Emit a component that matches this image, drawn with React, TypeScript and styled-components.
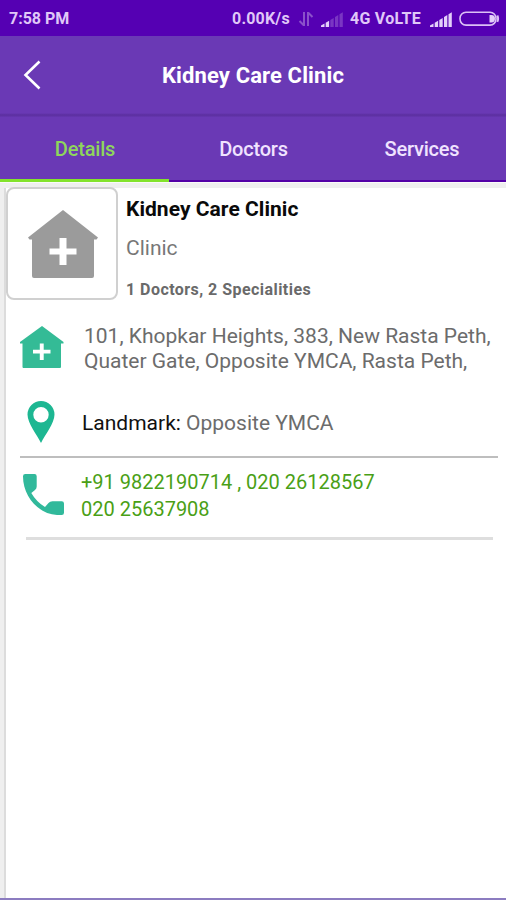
import React from "react";
import styled, { createGlobalStyle } from "styled-components";

const GlobalStyle = createGlobalStyle`
  * { box-sizing: border-box; }
  body { margin: 0; background: #fff; font-family: Roboto, "Liberation Sans", sans-serif; }
  svg { display: block; flex: none; }
`;

const Screen = styled.main`
  width: 506px;
  height: 900px;
  display: flex;
  flex-direction: column;
  overflow: hidden;
  background: #fff;
`;

const StatusBar = styled.div`
  height: 36px;
  flex: none;
  display: flex;
  align-items: center;
  justify-content: space-between;
  padding: 2px 6px 0 9px;
  background: #5500b3;
  color: #e0c8f8;
`;

const StatusGroup = styled.div`
  display: grid;
  grid-template-columns: 66px 22px 30px 79px 30px 41px;
  align-items: center;
`;

const StatusText = styled.span<{ $spacing?: number }>`
  font-size: 16px;
  font-weight: 700;
  line-height: 20px;
  white-space: nowrap;
  letter-spacing: ${(p) => p.$spacing ?? 0}px;
`;

const Header = styled.header`
  height: 81px;
  flex: none;
  display: grid;
  grid-template-columns: 64px 1fr 64px;
  align-items: center;
  background: linear-gradient(#6a39b5 77px, #5b2f9f 79px, #6637b0 81px);
`;

const BackButton = styled.button`
  border: 0;
  background: none;
  padding: 0 0 3px 22px;
`;

const Title = styled.h1`
  margin: 0 0 1px;
  text-align: center;
  color: #fff;
  font-size: 22px;
  font-weight: 700;
  line-height: 28px;
  white-space: nowrap;
  letter-spacing: 0.12px;
`;

const Tabs = styled.nav`
  height: 65px;
  flex: none;
  display: grid;
  grid-template-columns: 169px 168px 169px;
  background: #6a39b5;
`;

const Tab = styled.button<{ $active?: boolean }>`
  border: 0;
  border-bottom: ${(p) => (p.$active ? "3px solid #83e32c" : "2px solid #5300a6")};
  background: none;
  padding: ${(p) => (p.$active ? "2px" : "1px")} 0 0 1px;
  font: 500 20px/24px Roboto, sans-serif;
  letter-spacing: -0.2px;
  color: ${(p) => (p.$active ? "#8fd65c" : "#f0e3ff")};
`;

const Body = styled.section`
  flex: 1;
  min-height: 0;
  display: flex;
  background: #efefef;
  border-top: 1px solid #fafafa;
  border-bottom: 2px solid #8c7cc0;
`;

const Sheet = styled.div`
  flex: 1;
  margin: 5px 0 0 4px;
  border-left: 2px solid #dcdcdc;
  background: #fff;
  display: flex;
  flex-direction: column;
`;

const Summary = styled.div`
  display: flex;
  height: 120px;
`;

const Thumb = styled.div`
  width: 112px;
  height: 113px;
  margin-top: -1px;
  flex: none;
  border: 2px solid #d0d0d0;
  border-radius: 8px;
  background: #fff;
  display: flex;
  align-items: center;
  justify-content: center;
  padding-left: 2px;
`;

const SummaryText = styled.div`
  padding-left: 8px;
  display: flex;
  flex-direction: column;
`;

const Name = styled.h2`
  margin: 7px 0 0;
  font-size: 21px;
  font-weight: 700;
  line-height: 28px;
  letter-spacing: 0.04px;
  color: #0a0a0a;
  white-space: nowrap;
`;

const Kind = styled.div`
  margin-top: 11px;
  font-size: 21px;
  line-height: 28px;
  color: #777;
`;

const Counts = styled.div`
  margin-top: 17px;
  font-size: 16px;
  font-weight: 700;
  line-height: 22px;
  letter-spacing: 0.45px;
  color: #6a6a6a;
  white-space: nowrap;
`;

const Row = styled.div<{ $height: number; $indent: number }>`
  height: ${(p) => p.$height}px;
  flex: none;
  display: grid;
  grid-template-columns: ${(p) => p.$indent}px 1fr;
`;

const IconCell = styled.div<{ $left: number; $top: number }>`
  padding: ${(p) => p.$top}px 0 0 ${(p) => p.$left}px;
`;

const Info = styled.div<{ $top: number; $size?: number; $leading?: number; $color?: string }>`
  padding-top: ${(p) => p.$top}px;
  font-size: ${(p) => p.$size ?? 21}px;
  line-height: ${(p) => p.$leading ?? 25}px;
  color: ${(p) => p.$color ?? "#6c6c6c"};
  white-space: nowrap;
`;

const Label = styled.span`
  color: #111;
`;

const Rule = styled.hr<{ $thick?: boolean }>`
  width: ${(p) => (p.$thick ? 467 : 478)}px;
  height: ${(p) => (p.$thick ? 3 : 2)}px;
  margin: 0 0 0 ${(p) => (p.$thick ? 20 : 14)}px;
  flex: none;
  border: 0;
  background: ${(p) => (p.$thick ? "#dedede" : "#bebebe")};
`;

const Arrows = () => (
  <svg width="17" height="16" viewBox="0 0 17 16" fill="none" stroke="#8b51ca" strokeWidth="2">
    <path d="M6 1v14M1.500 10l4 4M10 15V1M10.500 2l4 4" />
  </svg>
);

const bars = [
  "M1 16v-1.500l3.500-2V16Z",
  "M5.700 16v-4.200l3.400-2V16Z",
  "M10.300 16V9l3.400-2V16Z",
  "M15 16V6l3.300-2V16Z",
  "M19.500 16V3.300L22.800 1.300V16Z",
];

const Signal = ({ level }: { level: number }) => (
  <svg width="24" height="17" viewBox="0 0 24 17">
    {bars.map((d, i) => (
      <path key={i} d={d} fill={i < level ? "#e4cffa" : "#7a36c3"} />
    ))}
  </svg>
);

const Battery = () => (
  <svg width="41" height="16" viewBox="0 0 41 16">
    <rect x="1" y="1.300" width="36" height="12.800" rx="6" fill="none" stroke="#dcc0f6" strokeWidth="1.600" />
    <path d="M30.500 4h2q3.500 0 3.500 3.700t-3.500 3.700h-2z" fill="#e4cffa" />
    <path d="M38.300 4.500q1.600 3.200 0 6.400" fill="none" stroke="#dcc0f6" strokeWidth="2" />
  </svg>
);

const ClinicLarge = () => (
  <svg width="72" height="70" viewBox="0 0 72 70">
    <path d="M36 1 71 28.500 69.500 30.500H67V67q0 2-2 2H7q-2 0-2-2V30.500H2.500L1 28.500Z" fill="#9b9b9b" />
    <path d="M32.500 29h7v10.500H49.500v6H39.500V56h-7V45.500H22.500v-6H32.500Z" fill="#fff" />
  </svg>
);

const ClinicSmall = () => (
  <svg width="44" height="43" viewBox="0 0 44 43">
    <path d="M22 0 43.500 16v1.500H41V41q0 1-1 1H3.500q-1 0-1-1V17.500H0V16Z" fill="#34bb96" />
    <path d="M19.800 17.500h3.900v6.300h6.800v3.800h-6.800v6.400h-3.900v-6.400H13v-3.800h6.800Z" fill="#fff" />
  </svg>
);

const Pin = () => (
  <svg width="28" height="42" viewBox="0 0 28 42">
    <path fillRule="evenodd" d="M14 0A13.500 13.500 0 0 1 27.500 13.500C27.500 22 18 34 14 42C10 34 .5 22 .5 13.500A13.500 13.500 0 0 1 14 0ZM14 6a7.700 7.700 0 1 0 0 15.400A7.700 7.700 0 0 0 14 6Z" fill="#1db792" />
  </svg>
);

const Phone = () => (
  <svg width="41" height="41" viewBox="0 0 41 41">
    <path d="M2.300 0H11.500Q13.700 0 13.700 2.300V12.500Q13.700 14.500 12 16L8.300 19Q13.500 28 22 33L25.500 29Q27 27.200 29.500 27.200H38.700Q41 27.200 41 29.500V38.700Q41 41 38.700 41H34C15 40 0 22 0 2.300Q0 0 2.300 0Z" fill="#31b99b" />
  </svg>
);

export default function App() {
  return (
    <>
      <GlobalStyle />
      <Screen>
        <StatusBar>
          <StatusText>7:58 PM</StatusText>
          <StatusGroup>
            <StatusText $spacing={0.2}>0.00K/s</StatusText>
            <Arrows />
            <Signal level={2} />
            <StatusText $spacing={0.25}>4G VoLTE</StatusText>
            <Signal level={5} />
            <Battery />
          </StatusGroup>
        </StatusBar>
        <Header>
          <BackButton aria-label="Back">
            <svg width="20" height="30" viewBox="0 0 20 30" fill="none" stroke="#fff" strokeWidth="2.600">
              <path d="M17.500 1.500 3.500 15l14 13.500" />
            </svg>
          </BackButton>
          <Title>Kidney Care Clinic</Title>
        </Header>
        <Tabs>
          <Tab $active>Details</Tab>
          <Tab>Doctors</Tab>
          <Tab>Services</Tab>
        </Tabs>
        <Body>
          <Sheet>
            <Summary>
              <Thumb>
                <ClinicLarge />
              </Thumb>
              <SummaryText>
                <Name>Kidney Care Clinic</Name>
                <Kind>Clinic</Kind>
                <Counts>1 Doctors, 2 Specialities</Counts>
              </SummaryText>
            </Summary>
            <Row $height={76} $indent={78}>
              <IconCell $left={14} $top={18}>
                <ClinicSmall />
              </IconCell>
              <Info $top={16}>
                101, Khopkar Heights, 383, New Rasta Peth,
                <br />
                Quater Gate, Opposite YMCA, Rasta Peth,
              </Info>
            </Row>
            <Row $height={72} $indent={76}>
              <IconCell $left={21} $top={17}>
                <Pin />
              </IconCell>
              <Info $top={27}>
                <Label>Landmark:</Label> Opposite YMCA
              </Info>
            </Row>
            <Rule />
            <Row $height={79} $indent={75}>
              <IconCell $left={17} $top={16}>
                <Phone />
              </IconCell>
              <Info $top={11} $size={20} $leading={27} $color="#4a9f16">
                +91 9822190714 , 020 26128567
                <br />
                020 25637908
              </Info>
            </Row>
            <Rule $thick />
          </Sheet>
        </Body>
      </Screen>
    </>
  );
}
